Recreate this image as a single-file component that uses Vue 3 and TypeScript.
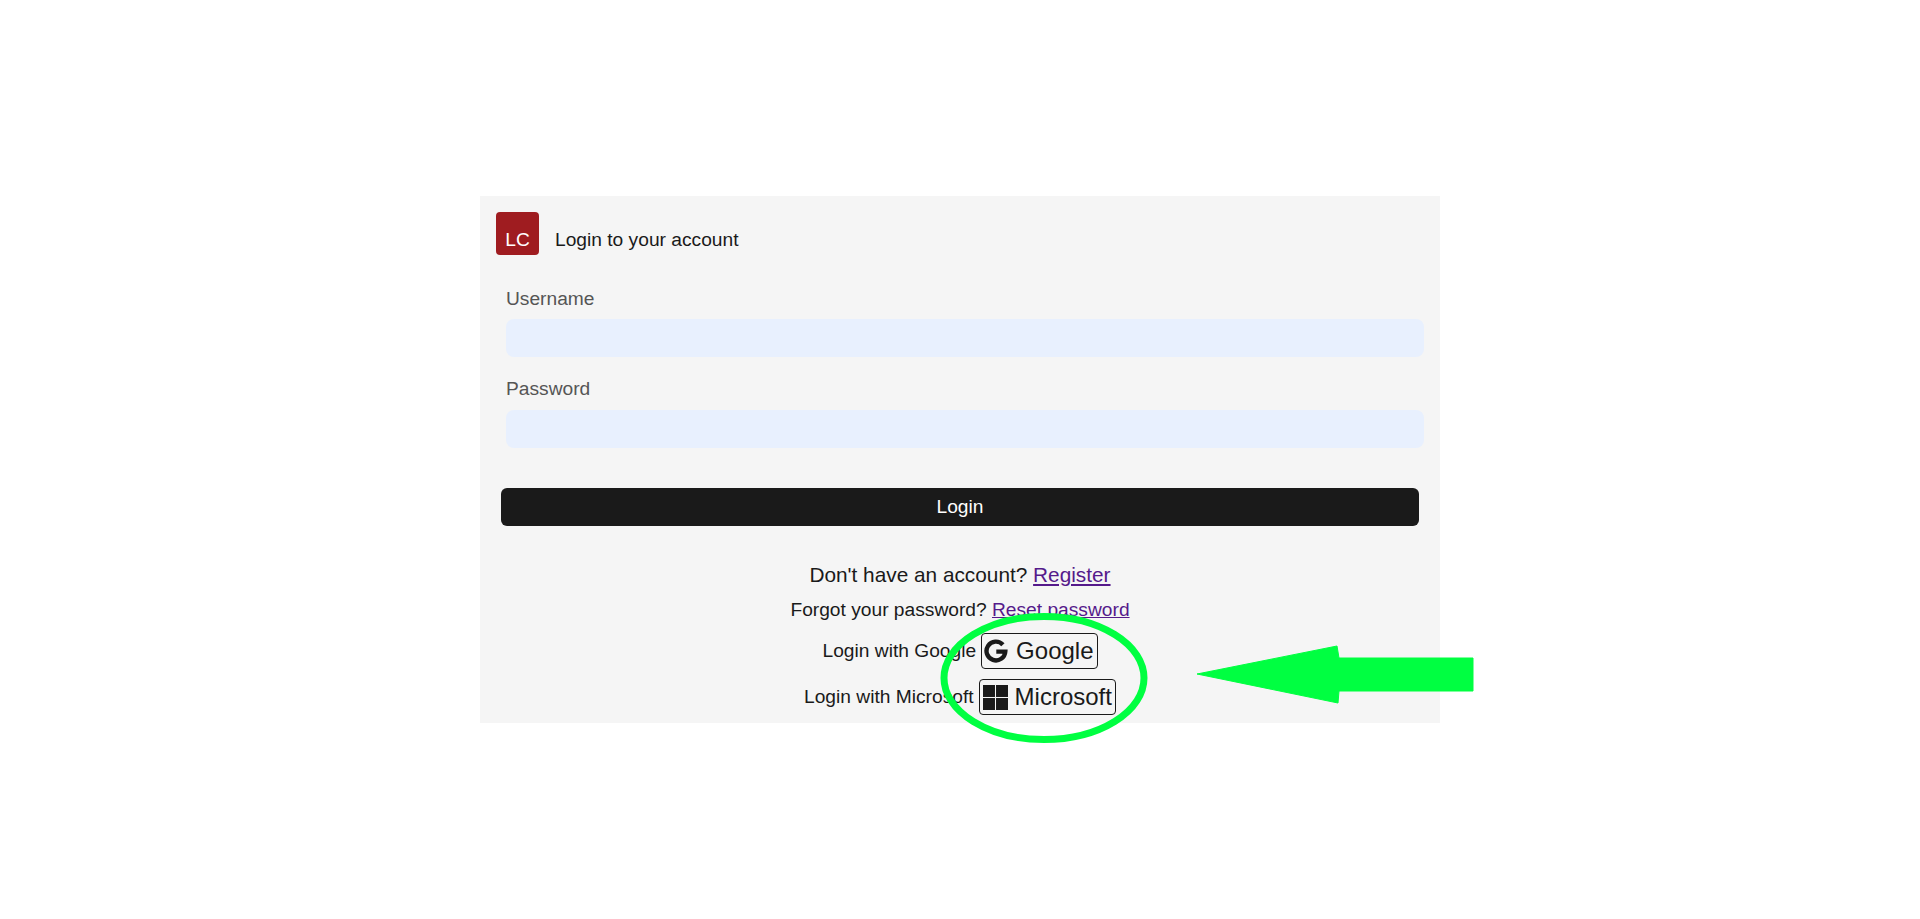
<script setup lang="ts">
import { ref } from 'vue'

const username = ref('')
const password = ref('')
</script>

<template>
  <div class="page">
    <main class="card">
      <header class="head">
        <div class="logo">LC</div>
        <h1>Login to your account</h1>
      </header>

      <form class="form" @submit.prevent>
        <label for="username">Username</label>
        <input id="username" v-model="username" type="text" />
        <label for="password">Password</label>
        <input id="password" v-model="password" type="password" />
        <button class="submit" type="submit">Login</button>
      </form>

      <p class="register">Don't have an account? <a href="#">Register</a></p>
      <p class="forgot">Forgot your password? <a href="#">Reset password</a></p>

      <div class="sso">
        <span>Login with Google</span>
        <button class="provider" type="button">
          <svg viewBox="0 0 24 24" width="24" height="24">
            <path d="M18.9 5.7A9.4 9.4 0 1 0 21.3 12.6H12.3" fill="none" stroke="#1a1a1a" stroke-width="4.4" />
          </svg>
          Google
        </button>
      </div>

      <div class="sso">
        <span>Login with Microsoft</span>
        <button class="provider ms-btn" type="button">
          <svg class="ms" viewBox="0 0 24 24" width="25" height="25" fill="#1a1a1a">
            <rect x="0" y="0" width="11.5" height="11.5" />
            <rect x="12.5" y="0" width="11.5" height="11.5" />
            <rect x="0" y="12.5" width="11.5" height="11.5" />
            <rect x="12.5" y="12.5" width="11.5" height="11.5" />
          </svg>
          Microsoft
        </button>
      </div>
    </main>

    <!-- hand drawn annotation over the page -->
    <svg class="markup" viewBox="0 0 1920 919" width="1920" height="919">
      <ellipse cx="1044" cy="678" rx="100" ry="61.5" fill="none" stroke="#00ff41" stroke-width="7" />
      <path
        d="M1197 674 L1337 646 L1339 658 L1473 658 L1473 691 L1339 691 L1338 703 Z"
        fill="#00ff41"
        stroke="#00ff41"
        stroke-width="1"
        stroke-linejoin="round"
      />
    </svg>
  </div>
</template>

<style scoped>
.page {
  position: relative;
  min-height: 919px;
  font-family: 'Liberation Sans', Arial, sans-serif;
  font-size: 19.2px;
  color: #1a1a1a;
  overflow: hidden;
}

.card {
  width: 960px;
  height: 527px;
  margin: 0 auto;
  position: relative;
  top: 196px;
  background: #f5f5f5;
  padding: 16px;
  box-sizing: border-box;
}

.head {
  display: flex;
  align-items: center;
  gap: 16px;
}

.logo {
  width: 43px;
  height: 43px;
  box-sizing: border-box;
  padding-bottom: 4px;
  display: flex;
  align-items: flex-end;
  justify-content: center;
  background: #9f1c20;
  border-radius: 4px;
  color: #fff;
  font-size: 19.2px;
}

h1 {
  margin: 12px 0 0;
  font-size: 19.2px;
  font-weight: 400;
}

.form {
  display: flex;
  flex-direction: column;
  padding: 0 0 0 10px;
  margin-top: 33px;
}

label {
  color: #555;
  line-height: 22px;
}

input {
  height: 38px;
  margin: 9px 0 21px;
  border: none;
  border-radius: 8px;
  background: #e8f0fe;
  box-sizing: border-box;
  outline: none;
}

#password {
  margin-top: 10px;
}

.submit {
  width: 918px;
  height: 38px;
  margin: 19px 0 0 -5px;
  background: #1a1a1a;
  color: #fff;
  border: none;
  border-radius: 6px;
  font: inherit;
}

p {
  margin: 0;
  text-align: center;
}

.register {
  margin-top: 37px;
  font-size: 20.8px;
}

.forgot {
  margin-top: 12px;
}

a {
  color: #551a8b;
}

.sso {
  display: flex;
  justify-content: center;
  align-items: center;
  gap: 5px;
  margin-top: 12px;
}

.sso + .sso {
  margin-top: 10px;
}

.provider {
  display: flex;
  align-items: center;
  gap: 8px;
  height: 36px;
  padding: 0 3px 0 2px;
  background: transparent;
  border: 1px solid #1a1a1a;
  border-radius: 4px;
  color: #1a1a1a;
  font: inherit;
  font-size: 24px;
}

.ms-btn {
  gap: 7px;
}

.ms {
  margin-left: 1px;
}

.markup {
  position: absolute;
  left: 0;
  top: 0;
  pointer-events: none;
}
</style>

<style>
body {
  background: #fff;
}
</style>
